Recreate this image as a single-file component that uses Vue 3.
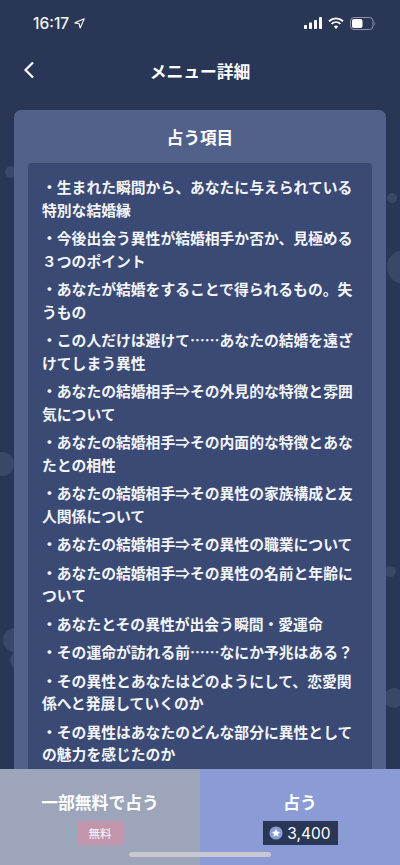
<script setup>
const items = [
  '・生まれた瞬間から、あなたに与えられている特別な結婚縁',
  '・今後出会う異性が結婚相手か否か、見極める３つのポイント',
  '・あなたが結婚をすることで得られるもの。失うもの',
  '・この人だけは避けて……あなたの結婚を遠ざけてしまう異性',
  '・あなたの結婚相手⇒その外見的な特徴と雰囲気について',
  '・あなたの結婚相手⇒その内面的な特徴とあなたとの相性',
  '・あなたの結婚相手⇒その異性の家族構成と友人関係について',
  '・あなたの結婚相手⇒その異性の職業について',
  '・あなたの結婚相手⇒その異性の名前と年齢について',
  '・あなたとその異性が出会う瞬間・愛運命',
  '・その運命が訪れる前……なにか予兆はある？',
  '・その異性とあなたはどのようにして、恋愛関係へと発展していくのか',
  '・その異性はあなたのどんな部分に異性としての魅力を感じたのか'
]
const dots = [
  { left: 5, top: 166, size: 12 },
  { left: 387, top: 193, size: 10 },
  { left: 387, top: 250, size: 34 },
  { left: -10, top: 452, size: 24 },
  { left: 385, top: 566, size: 11 },
  { left: 3, top: 628, size: 24 },
  { left: 10, top: 650, size: 20 },
  { left: 384, top: 688, size: 20 }
]
</script>

<template>
  <div class="page">
    <span
      v-for="(d, i) in dots"
      :key="i"
      class="dot"
      :style="{ left: d.left + 'px', top: d.top + 'px', width: d.size + 'px', height: d.size + 'px' }"
    ></span>

    <div class="status">
      <div class="status-left">
        <span class="time">16:17</span>
        <svg class="loc" viewBox="0 0 10 10" width="11" height="11">
          <path d="M9.3.7 .8 4.4 4.7 5.3 5.6 9.2Z" fill="none" stroke="#fff" stroke-width="1" stroke-linejoin="round" />
        </svg>
      </div>
      <div class="status-right">
        <svg viewBox="0 0 18 12" width="18" height="12">
          <rect x="0" y="8" width="3" height="4" rx=".7" fill="#fff" />
          <rect x="5" y="5.5" width="3" height="6.5" rx=".7" fill="#fff" />
          <rect x="10" y="3" width="3" height="9" rx=".7" fill="#fff" />
          <rect x="15" y="0" width="3" height="12" rx=".7" fill="#fff" />
        </svg>
        <svg viewBox="0 0 16 12" width="16" height="12">
          <path d="M1 4.2C5 .4 11 .4 15 4.2" fill="none" stroke="#fff" stroke-width="1.9" />
          <path d="M3.6 6.9C6.2 4.5 9.8 4.5 12.4 6.9" fill="none" stroke="#fff" stroke-width="1.9" />
          <path d="M8 12 5.7 9.4C7 8.3 9 8.3 10.3 9.4Z" fill="#fff" />
        </svg>
        <svg viewBox="0 0 26 13" width="26" height="13">
          <rect x=".5" y=".5" width="22.5" height="12" rx="3.5" fill="none" stroke="#8c94a8" />
          <rect x="2" y="2" width="10.5" height="9" rx="2" fill="#fff" />
          <path d="M24.5 4.5C25.4 4.9 25.4 8.1 24.5 8.5Z" fill="#8c94a8" />
        </svg>
      </div>
    </div>

    <header class="nav">
      <svg class="back" viewBox="0 0 12 18" width="12" height="18">
        <path d="M10 1.5 2.5 9 10 16.5" fill="none" stroke="#fff" stroke-width="2.2" />
      </svg>
      <h1 class="nav-title">メニュー詳細</h1>
    </header>

    <main class="card">
      <h2 class="card-title">占う項目</h2>
      <div class="panel">
        <p v-for="item in items" :key="item" class="item">{{ item }}</p>
      </div>
    </main>

    <footer class="actions">
      <div class="action free">
        <span class="action-label">一部無料で占う</span>
        <span class="badge">無料</span>
      </div>
      <div class="action paid">
        <span class="action-label">占う</span>
        <span class="price">
          <svg viewBox="0 0 14 14" width="14" height="14">
            <circle cx="7" cy="7" r="6.6" fill="#8a9bd6" />
            <path d="M7 3 8.2 5.6 11 6 9 7.9 9.5 10.7 7 9.3 4.5 10.7 5 7.9 3 6 5.8 5.6Z" fill="#fff" />
          </svg>
          3,400
        </span>
      </div>
    </footer>
    <span class="home"></span>
  </div>
</template>

<style scoped>
.page {
  position: relative;
  width: 400px;
  height: 865px;
  overflow: hidden;
  display: flex;
  flex-direction: column;
  background: #2a3655;
  color: #fff;
  font-family: "Noto Sans CJK JP", "Noto Sans", sans-serif;
}
.dot {
  position: absolute;
  border-radius: 50%;
  background: #3b4767;
}
.status {
  position: relative;
  height: 44px;
  flex: none;
  display: flex;
  justify-content: space-between;
  align-items: center;
  padding: 2px 24px 0 33px;
  box-sizing: border-box;
}
.status-left {
  display: flex;
  align-items: center;
  gap: 5px;
}
.time {
  font-family: Inter, "Liberation Sans", sans-serif;
  font-size: 15.5px;
  font-weight: 500;
  color: #f2f3f6;
}
.status-right {
  display: flex;
  align-items: center;
  gap: 6px;
}
.nav {
  position: relative;
  flex: none;
  height: 66px;
  display: flex;
  align-items: center;
  justify-content: center;
}
.back {
  position: absolute;
  left: 23px;
  top: 17px;
}
.nav-title {
  margin: 0 0 13px;
  font-size: 16.8px;
  font-weight: 700;
  line-height: 24px;
}
.card {
  position: relative;
  flex: 1;
  min-height: 0;
  margin: 0 14px;
  padding: 0 14px;
  overflow: hidden;
  background: #52618a;
  border-radius: 7px 7px 0 0;
}
.card-title {
  margin: 0;
  height: 53px;
  line-height: 54px;
  text-align: center;
  font-size: 16.6px;
  font-weight: 700;
}
.panel {
  background: #3a4a74;
  border-radius: 4px 4px 0 0;
  padding: 13px 15px 20px 14px;
}
.item {
  margin: 0 0 6px;
  font-size: 14.8px;
  line-height: 22.5px;
  font-weight: 700;
  color: #f4f5f8;
}
.actions {
  position: relative;
  flex: none;
  height: 96px;
  display: flex;
}
.action {
  flex: 1;
  display: flex;
  flex-direction: column;
  align-items: center;
  padding-top: 21px;
  box-sizing: border-box;
}
.free {
  background: #9ca5ba;
}
.paid {
  background: #8a9bd6;
}
.action-label {
  font-size: 16.8px;
  line-height: 24px;
  font-weight: 700;
}
.badge {
  margin-top: 7px;
  width: 46px;
  height: 24px;
  line-height: 24px;
  text-align: center;
  background: #c295ac;
  font-size: 11.5px;
  color: #eef0f4;
  font-weight: 500;
}
.price {
  margin-top: 7px;
  width: 75px;
  height: 24px;
  box-sizing: border-box;
  display: flex;
  align-items: center;
  justify-content: center;
  gap: 4px;
  background: #2a3655;
  font-family: Inter, "Liberation Sans", sans-serif;
  font-size: 15.5px;
}
.home {
  position: absolute;
  left: 129px;
  bottom: 8px;
  width: 142px;
  height: 5px;
  border-radius: 3px;
  background: #c9c8d2;
}
</style>
